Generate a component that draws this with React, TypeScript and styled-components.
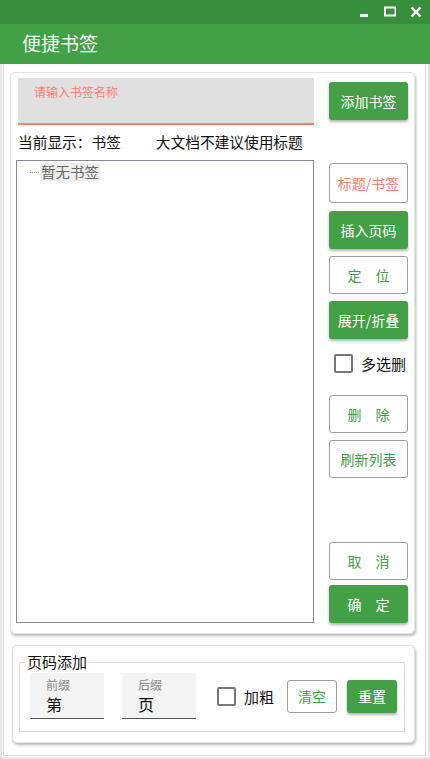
import React from 'react';
import styled, { createGlobalStyle } from 'styled-components';

const GlobalStyle = createGlobalStyle`
  * { box-sizing: border-box; }
  body {
    margin: 0;
    font-family: "Noto Sans CJK SC", "Noto Sans", sans-serif;
    background: #fff;
  }
`;

const green = '#43a047';
const salmon = '#fa8072';

const Root = styled.div`
  width: 430px;
  height: 759px;
  display: flex;
  flex-direction: column;
  overflow: hidden;
`;

const TitleBar = styled.div`
  height: 24px;
  background: #388e3c;
  display: flex;
  justify-content: flex-end;
  align-items: center;
  padding-right: 8px;
  gap: 14px;
`;

const WinBtn = styled.svg`
  width: 12px;
  height: 12px;
  display: block;
`;

const Header = styled.div`
  height: 40px;
  background: ${green};
  display: flex;
  align-items: center;
  padding: 0 0 2px 22px;
  color: #f2f7f2;
  font-size: 19px;
  line-height: 24px;
`;

const Frame = styled.div`
  flex: 1;
  display: flex;
  background: #fff;
  border: 2px solid #e6e6e6;
  border-top: none;
  padding: 0 2px 1px 1px;
`;

const Inner = styled.div`
  flex: 1;
  display: flex;
  flex-direction: column;
  border: 1px solid #d8d8d8;
  border-top: none;
  padding: 8px 10px 0 6px;
`;

const Card = styled.div`
  background: #fff;
  border: 1px solid #e2e2e2;
  border-radius: 5px;
  box-shadow: 1px 2px 3px rgba(0, 0, 0, 0.28);
`;

const MainCard = styled(Card)`
  width: 405px;
  height: 562px;
  display: grid;
  grid-template-columns: 296px 79px;
  column-gap: 15px;
  padding: 5px 6px 10px 7px;
`;

const LeftCol = styled.div`
  display: flex;
  flex-direction: column;
`;

const NameInput = styled.div`
  height: 47px;
  background: #e0e0e0;
  border-bottom: 2px solid ${salmon};
  padding: 6px 16px 0;
  color: ${salmon};
  font-size: 12px;
  line-height: 15px;
`;

const InfoRow = styled.div`
  height: 35px;
  display: flex;
  align-items: center;
  padding-bottom: 2px;
  font-size: 14.7px;
  color: #111;
`;

const InfoHint = styled.span`
  margin-left: 35px;
`;

const Tree = styled.div`
  flex: 1;
  margin-left: -2px;
  border: 1px solid #8a8a99;
  padding: 2px 0 0 13px;
`;

const TreeItem = styled.div`
  display: flex;
  align-items: center;
`;

const TreeDots = styled.span`
  width: 9px;
  border-top: 1px dotted #888;
  margin-right: 1px;
`;

const TreeText = styled.span`
  background: #eeeeee;
  color: #666;
  font-size: 14.5px;
  line-height: 18px;
  padding: 0 1px;
`;

const RightCol = styled.div`
  display: flex;
  flex-direction: column;
`;

const Btn = styled.div<{ $variant: 'solid' | 'outline' | 'warn'; $mt?: number; $h?: number }>`
  height: ${(p) => p.$h ?? 38}px;
  margin-top: ${(p) => p.$mt ?? 0}px;
  border-radius: 3px;
  display: flex;
  align-items: center;
  justify-content: center;
  font-size: 14px;
  line-height: 18px;
  white-space: nowrap;
  flex-shrink: 0;
  ${(p) =>
    p.$variant === 'solid'
      ? `background: ${green}; color: #fff; box-shadow: 0 2px 3px rgba(0,0,0,0.3);`
      : `background: #fff; border: 1px solid #9e9e9e; color: ${
          p.$variant === 'warn' ? salmon : green
        };`}
`;

const Spacer = styled.div`
  flex: 1;
`;

const CheckRow = styled.label<{ $mt?: number; $ml?: number }>`
  display: flex;
  align-items: center;
  gap: 8px;
  margin-top: ${(p) => p.$mt ?? 0}px;
  margin-left: ${(p) => p.$ml ?? 0}px;
  padding-left: 5px;
  height: 19px;
  font-size: 15px;
  color: #111;
  white-space: nowrap;
`;

const Box = styled.span`
  width: 19px;
  height: 19px;
  border: 2px solid #777;
  border-radius: 2px;
  background: #fff;
  flex-shrink: 0;
`;

const PageCard = styled(Card)`
  width: 403px;
  margin: 11px 0 0 2px;
  padding: 6px 9px 10px 6px;
`;

const Group = styled.fieldset`
  margin: 0;
  border: 1px solid #dcdcdc;
  padding: 1px 7px 12px 10px;
  display: flex;
  align-items: center;
`;

const GroupTitle = styled.legend`
  margin-left: -5px;
  padding: 0 2px;
  font-size: 15px;
  line-height: 20px;
  color: #111;
`;

const Fields = styled.div`
  display: flex;
  align-items: center;
`;

const Field = styled.div<{ $ml?: number }>`
  width: 74px;
  height: 46px;
  margin-left: ${(p) => p.$ml ?? 0}px;
  background: #f4f4f4;
  border-bottom: 1px solid #555;
  padding: 4px 0 0 16px;
  display: flex;
  flex-direction: column;
  gap: 1px;
`;

const FieldLabel = styled.span`
  font-size: 12px;
  line-height: 16px;
  color: #888;
`;

const FieldValue = styled.span`
  font-size: 16px;
  line-height: 20px;
  color: #111;
`;

const SmallBtn = styled(Btn)<{ $ml?: number }>`
  width: 50px;
  margin-left: ${(p) => p.$ml ?? 0}px;
`;

export default function App() {
  return (
    <Root>
      <GlobalStyle />
      <TitleBar>
        <WinBtn viewBox="0 0 12 12">
          <rect x="2" y="8" width="8" height="3" fill="#fff" />
        </WinBtn>
        <WinBtn viewBox="0 0 12 12">
          <rect x="1" y="1.5" width="10.5" height="8" fill="none" stroke="#fff" strokeWidth="2" />
        </WinBtn>
        <WinBtn viewBox="0 0 12 12">
          <path d="M1.5 1.5 L10.5 10.5 M10.5 1.5 L1.5 10.5" stroke="#fff" strokeWidth="2.4" />
        </WinBtn>
      </TitleBar>
      <Header>便捷书签</Header>
      <Frame>
        <Inner>
          <MainCard>
            <LeftCol>
              <NameInput>请输入书签名称</NameInput>
              <InfoRow>
                当前显示：书签
                <InfoHint>大文档不建议使用标题</InfoHint>
              </InfoRow>
              <Tree>
                <TreeItem>
                  <TreeDots />
                  <TreeText>暂无书签</TreeText>
                </TreeItem>
              </Tree>
            </LeftCol>
            <RightCol>
              <Btn $variant="solid" $mt={4}>添加书签</Btn>
              <Btn $variant="warn" $mt={43} $h={40}>标题/书签</Btn>
              <Btn $variant="solid" $mt={8}>插入页码</Btn>
              <Btn $variant="outline" $mt={7}>定　位</Btn>
              <Btn $variant="solid" $mt={7}>展开/折叠</Btn>
              <CheckRow $mt={15}>
                <Box />
                多选删
              </CheckRow>
              <Btn $variant="outline" $mt={22}>删　除</Btn>
              <Btn $variant="outline" $mt={7}>刷新列表</Btn>
              <Spacer />
              <Btn $variant="outline">取　消</Btn>
              <Btn $variant="solid" $mt={5}>确　定</Btn>
            </RightCol>
          </MainCard>
          <PageCard>
            <Group>
              <GroupTitle>页码添加</GroupTitle>
              <Fields>
                <Field>
                  <FieldLabel>前缀</FieldLabel>
                  <FieldValue>第</FieldValue>
                </Field>
                <Field $ml={18}>
                  <FieldLabel>后缀</FieldLabel>
                  <FieldValue>页</FieldValue>
                </Field>
                <CheckRow $ml={16}>
                  <Box />
                  加粗
                </CheckRow>
                <SmallBtn $variant="outline" $h={33} $ml={13}>清空</SmallBtn>
                <SmallBtn $variant="solid" $h={33} $ml={10}>重置</SmallBtn>
              </Fields>
            </Group>
          </PageCard>
        </Inner>
      </Frame>
    </Root>
  );
}
